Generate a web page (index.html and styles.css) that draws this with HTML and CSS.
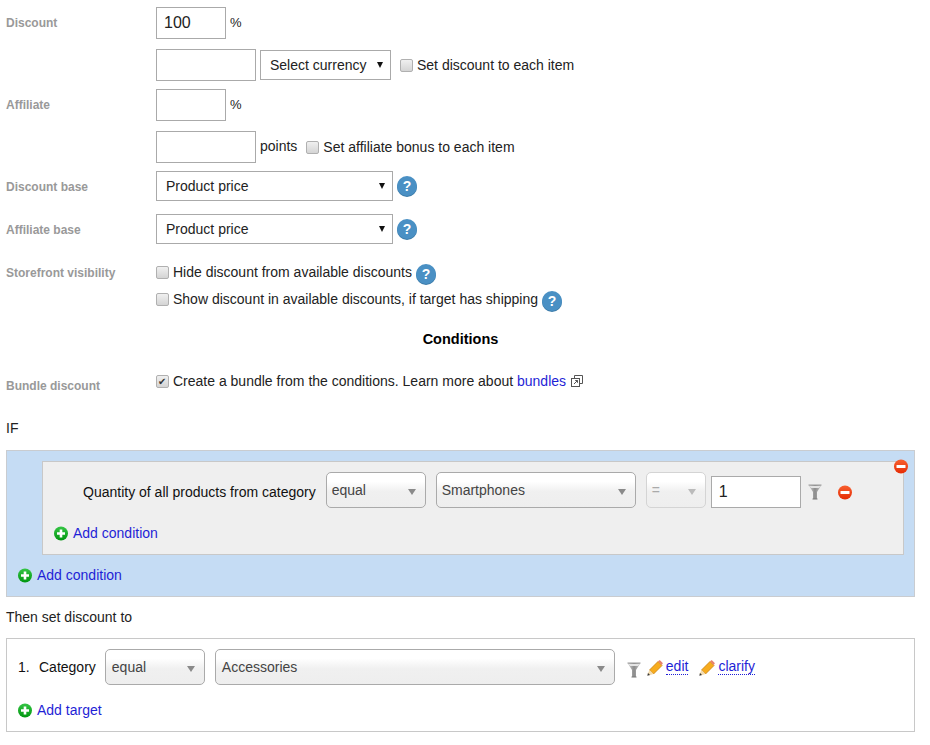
FILE: index.html
```html
<!DOCTYPE html>
<html lang="en">
<head>
    <meta charset="UTF-8">
    <title>Discount</title>
    <link rel="stylesheet" href="styles.css">
</head>
<body>

    <svg class="sprite" width="0" height="0">
        <defs>
            <linearGradient id="greenFill" x1="0" y1="0" x2="0" y2="1">
                <stop offset="0" stop-color="#35c545"/>
                <stop offset="1" stop-color="#00960f"/>
            </linearGradient>
            <linearGradient id="redFill" x1="0" y1="0" x2="0" y2="1">
                <stop offset="0" stop-color="#f8602f"/>
                <stop offset="1" stop-color="#e52c05"/>
            </linearGradient>
            <linearGradient id="funnelFill" x1="0" y1="0" x2="1" y2="0">
                <stop offset="0" stop-color="#d0d0d0"/>
                <stop offset="0.5" stop-color="#8c8c8c"/>
                <stop offset="1" stop-color="#c4c4c4"/>
            </linearGradient>
        </defs>
        <symbol id="icon-plus" viewBox="0 0 14 15">
            <circle cx="7" cy="7.5" r="7" fill="url(#greenFill)"/>
            <path d="M5.7 3.5h2.6v2.7H11v2.6H8.3v2.7H5.7V8.8H3V6.2h2.7z" fill="#fff"/>
        </symbol>
        <symbol id="icon-minus" viewBox="0 0 14 15">
            <circle cx="7" cy="7.5" r="7" fill="url(#redFill)"/>
            <rect x="2.5" y="6" width="9" height="3" rx="0.5" fill="#fff"/>
        </symbol>
        <symbol id="icon-funnel" viewBox="0 0 14 16">
            <path d="M0.5 1h13L9 8v7H5V8z" fill="url(#funnelFill)"/>
            <path d="M1.5 2h11l-1.5 2H3z" fill="#e4e4e4"/>
            <path d="M0.5 1h13" stroke="#9a9a9a" stroke-width="1"/>
            <path d="M4.5 15h5" stroke="#777" stroke-width="1"/>
        </symbol>
        <symbol id="icon-pencil" viewBox="0 0 16 16">
            <path d="M2.5 10L11 1.5l4 4L6.500 14z" fill="#f7ac1e" stroke="#c97d0a" stroke-width="0.8"/>
            <path d="M11 1.500l1-1c0.4-0.400 0.800-0.400 1.200 0l2.300 2.300c0.400 0.400 0.400 0.800 0 1.200l-1 1z" fill="#e8826c"/>
            <path d="M2.500 10l4 4-4.500 1.500-1.500-1.500z" fill="#f3dcb0"/>
            <path d="M0.300 15.700l0.700-2.700 2 2z" fill="#333"/>
        </symbol>
        <symbol id="icon-popup" viewBox="0 0 12 12">
            <path d="M3.5 3.5V0.5h8v8h-3" fill="none" stroke="#555" stroke-width="1"/>
            <rect x="0.5" y="3.5" width="8" height="8" fill="#fff" stroke="#555"/>
            <path d="M3 9l3.5-3.5M4.2 5.5h2.3v2.3" fill="none" stroke="#555" stroke-width="1"/>
        </symbol>
    </svg>

    <div class="form">
        <div class="row gap-10">
            <div class="row-label">Discount</div>
            <input class="field field-small field-big-text" type="text" value="100">
            <span class="unit">%</span>
        </div>
        <div class="row gap-8">
            <div class="row-label"></div>
            <input class="field field-medium" type="text">
            <div class="native-select currency-select">Select currency<i class="caret"></i></div>
            <label class="check currency-check"><input type="checkbox">Set discount to each item</label>
        </div>
        <div class="row gap-10">
            <div class="row-label">Affiliate</div>
            <input class="field field-small" type="text">
            <span class="unit">%</span>
        </div>
        <div class="row gap-8">
            <div class="row-label"></div>
            <input class="field field-medium" type="text">
            <span class="points">points</span>
            <label class="check points-check"><input type="checkbox">Set affiliate bonus to each item</label>
        </div>
        <div class="row gap-13">
            <div class="row-label label-nudge">Discount base</div>
            <div class="native-select base-select">Product price<i class="caret"></i></div>
            <span class="help">?</span>
        </div>
        <div class="row gap-18">
            <div class="row-label label-nudge">Affiliate base</div>
            <div class="native-select base-select">Product price<i class="caret"></i></div>
            <span class="help">?</span>
        </div>
        <div class="row row-check gap-7">
            <div class="row-label label-nudge">Storefront visibility</div>
            <label class="check"><input type="checkbox">Hide discount from available discounts</label>
            <span class="help help-check">?</span>
        </div>
        <div class="row row-check gap-20">
            <div class="row-label"></div>
            <label class="check"><input type="checkbox">Show discount in available discounts, if target has shipping</label>
            <span class="help help-check">?</span>
        </div>

        <h2 class="section-title">Conditions</h2>

        <div class="row row-check gap-27">
            <div class="row-label label-low">Bundle discount</div>
            <label class="check"><input type="checkbox" checked>Create a bundle from the conditions. Learn more about&nbsp;<a href="#">bundles</a></label>
            <svg class="icon-popup"><use href="#icon-popup"/></svg>
        </div>
    </div>

    <div class="plain-line if-line">IF</div>

    <div class="condition-group">
        <svg class="icon group-remove"><use href="#icon-minus"/></svg>
        <div class="condition-inner">
            <div class="condition-row">
                <span class="condition-name">Quantity of all products from category</span>
                <div class="fancy-select select-op">equal<i class="caret-gray"></i></div>
                <div class="fancy-select select-long">Smartphones<i class="caret-gray"></i></div>
                <div class="fancy-select select-eq is-disabled">=<i class="caret-gray"></i></div>
                <input class="field field-value" type="text" value="1">
                <svg class="icon-funnel row-funnel"><use href="#icon-funnel"/></svg>
                <svg class="icon row-remove"><use href="#icon-minus"/></svg>
            </div>
            <a class="add-link" href="#"><svg class="icon"><use href="#icon-plus"/></svg>Add condition</a>
        </div>
        <a class="add-link" href="#"><svg class="icon"><use href="#icon-plus"/></svg>Add condition</a>
    </div>

    <div class="plain-line then-line">Then set discount to</div>

    <div class="target-box">
        <div class="target-row">
            <span class="target-num">1.</span>
            <span class="target-name">Category</span>
            <div class="fancy-select select-op">equal<i class="caret-gray"></i></div>
            <div class="fancy-select select-target">Accessories<i class="caret-gray"></i></div>
            <svg class="icon-funnel target-funnel"><use href="#icon-funnel"/></svg>
            <svg class="icon-pencil"><use href="#icon-pencil"/></svg>
            <a class="dotted-link" href="#">edit</a>
            <svg class="icon-pencil pencil-second"><use href="#icon-pencil"/></svg>
            <a class="dotted-link" href="#">clarify</a>
        </div>
        <a class="add-link" href="#"><svg class="icon"><use href="#icon-plus"/></svg>Add target</a>
    </div>

</body>
</html>
```

FILE: styles.css
```css
body {
    margin: 0;
    padding: 7px 15px 0 6px;
    font-family: "Liberation Sans", Arial, sans-serif;
    font-size: 14px;
    color: #222;
    background: #fff;
}
a {
    color: #1f1fd6;
    text-decoration: none;
}
.sprite {
    position: absolute;
}

/* Top form */
.row {
    display: flex;
    align-items: center;
}
.row-check {
    height: 20px;
}
.gap-7 { margin-bottom: 7px; }
.gap-8 { margin-bottom: 8px; }
.gap-10 { margin-bottom: 10px; }
.gap-13 { margin-bottom: 13px; }
.gap-18 { margin-bottom: 18px; }
.gap-20 { margin-bottom: 20px; }
.gap-27 { margin-bottom: 27px; }
.row-label {
    width: 150px;
    flex: none;
    font-size: 12px;
    font-weight: 700;
    color: #999;
}
.label-nudge {
    padding-top: 2px;
}
.label-low {
    padding-top: 10px;
}
.field {
    box-sizing: border-box;
    height: 32px;
    padding: 0 7px;
    border: 1px solid #aaa;
    background: #fff;
    font-family: inherit;
    font-size: 14px;
    color: #222;
    outline: none;
}
.field-small {
    width: 70px;
}
.field-medium {
    width: 100px;
}
.field-big-text {
    font-size: 16px;
}
.field-value {
    align-self: flex-end;
    width: 90px;
    margin-left: 5px;
    font-size: 16px;
}
.unit {
    margin: 0 0 2px 4px;
    font-size: 13px;
}
.points {
    margin-left: 4px;
    position: relative;
    top: -1px;
}

/* Plain selects */
.native-select {
    box-sizing: border-box;
    display: flex;
    align-items: center;
    justify-content: space-between;
    height: 30px;
    padding: 0 7px 0 9px;
    border: 1px solid #aaa;
    background: #fff;
    color: #222;
}
.currency-select {
    width: 131px;
    margin-left: 4px;
}
.base-select {
    width: 237px;
}
.caret {
    width: 0;
    height: 0;
    border-left: 3px solid transparent;
    border-right: 3px solid transparent;
    border-top: 6px solid #111;
}

/* Checkboxes */
.check {
    display: inline-flex;
    align-items: center;
}
.check input {
    appearance: none;
    box-sizing: border-box;
    position: relative;
    width: 13px;
    height: 13px;
    margin: 0 4px 0 0;
    border: 1px solid #b0b0b0;
    border-radius: 2px;
    background: linear-gradient(#f0f0f0, #d4d4d4);
}
.check input:checked::after {
    content: "✔";
    position: absolute;
    left: 1px;
    top: -1px;
    font-size: 10px;
    line-height: 14px;
    color: #333;
}
.currency-check {
    margin-left: 9px;
}
.points-check {
    margin-left: 9px;
}

.help {
    width: 20px;
    height: 20px;
    flex: none;
    margin-left: 4px;
    border-radius: 50%;
    background: #4a90c4;
    box-shadow: 0 1px 0 #3b7ba9;
    color: #fff;
    font-size: 14px;
    font-weight: 700;
    line-height: 20px;
    text-align: center;
}
.help-check {
    position: relative;
    top: 2px;
}

.section-title {
    height: 20px;
    margin: 0 0 22px;
    font-size: 14.5px;
    line-height: 20px;
    text-align: center;
    color: #000;
}
.icon-popup {
    width: 12px;
    height: 12px;
    margin-left: 5px;
}

.plain-line {
    height: 20px;
    line-height: 20px;
}
.if-line {
    margin-bottom: 12px;
}
.then-line {
    margin: 10px 0 11px;
}

/* Conditions */
.condition-group {
    position: relative;
    box-sizing: border-box;
    height: 147px;
    padding: 10px 10px 0 11px;
    border: 1px solid #c9ccd0;
    background: #c5dcf4;
}
.condition-inner {
    box-sizing: border-box;
    height: 94px;
    margin: 0 0 10px 24px;
    padding: 10px 0 0 11px;
    border: 1px solid #c8c8c8;
    background: #efefef;
}
.condition-row {
    display: flex;
    align-items: center;
    height: 36px;
    margin-bottom: 15px;
}
.condition-name {
    margin: 4px 10px 0 29px;
    color: #111;
}
.fancy-select {
    box-sizing: border-box;
    position: relative;
    display: flex;
    align-items: center;
    height: 36px;
    padding: 0 5px 1px;
    border: 1px solid #aaa;
    border-radius: 5px;
    background: linear-gradient(#fff 25%, #f0f0f0 55%, #eee);
    color: #444;
}
.select-op {
    width: 100px;
}
.select-long {
    width: 200px;
    margin-left: 10px;
}
.select-eq {
    width: 60px;
    margin-left: 10px;
}
.select-target {
    width: 400px;
    margin-left: 10px;
}
.target-row .fancy-select {
    padding-left: 6px;
}
.is-disabled {
    border-color: #d4d4d4;
    color: #aaa;
}
.caret-gray {
    position: absolute;
    right: 9px;
    top: 16px;
    width: 0;
    height: 0;
    border-left: 4px solid transparent;
    border-right: 4px solid transparent;
    border-top: 6px solid #8a8a8a;
}
.is-disabled .caret-gray {
    border-top-color: #bbb;
}
.icon {
    width: 14px;
    height: 15px;
    flex: none;
}
.icon-funnel {
    width: 14px;
    height: 16px;
    margin-left: 7px;
}
.row-funnel {
    margin-top: 4px;
}
.row-remove {
    margin: 4px 0 0 16px;
}
.group-remove {
    position: absolute;
    top: 8px;
    right: 6px;
}
.add-link {
    display: flex;
    align-items: center;
    gap: 5px;
    height: 20px;
}

/* Target */
.target-box {
    box-sizing: border-box;
    height: 94px;
    padding: 10px 0 0 11px;
    border: 1px solid #c8c8c8;
}
.target-row {
    display: flex;
    align-items: center;
    height: 36px;
    margin-bottom: 15px;
}
.target-num {
    width: 21px;
    color: #111;
}
.target-name {
    margin-right: 9px;
    color: #111;
}
.target-funnel {
    margin: 6px 0 0 12px;
}
.icon-pencil {
    width: 16px;
    height: 16px;
    margin: 2px 0 0 6px;
}
.pencil-second {
    margin-left: 11px;
}
.dotted-link {
    margin: -1px 0 0 3px;
    border-bottom: 1px dotted #1f1fd6;
    line-height: 15px;
}
```
